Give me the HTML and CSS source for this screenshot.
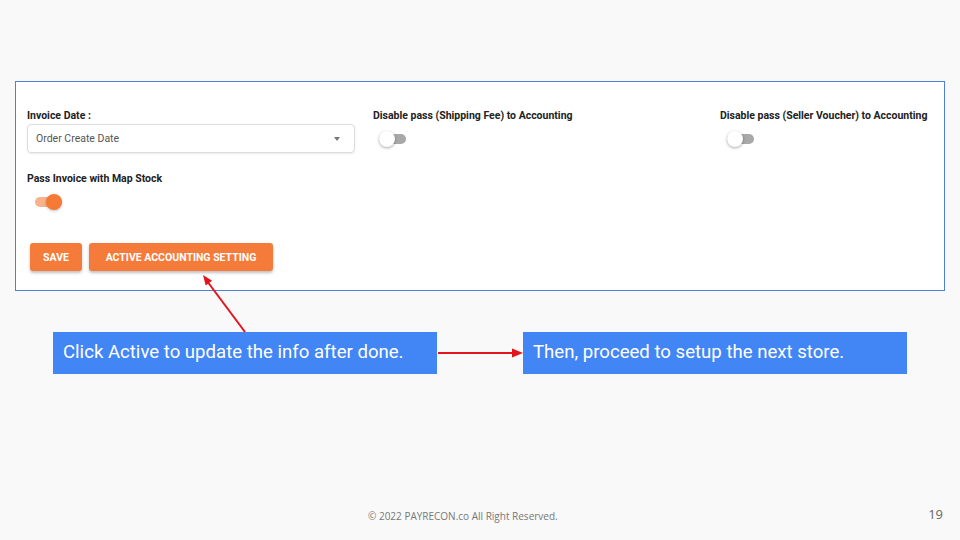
FILE: index.html
```html
<!DOCTYPE html>
<html lang="en">
<head>
    <meta charset="UTF-8">
    <meta name="viewport" content="width=device-width, initial-scale=1.0">
    <title>Accounting Setting</title>
    <link rel="stylesheet" href="styles.css">
</head>
<body>
    <div class="slide">
        <div class="panel">
            <div class="top-row">
                <div class="field">
                    <p class="label">Invoice Date :</p>
                    <div class="select">
                        <span>Order Create Date</span>
                        <span class="caret"></span>
                    </div>
                </div>
                <div class="field">
                    <p class="label">Disable pass (Shipping Fee) to Accounting</p>
                    <div class="switch-wrap">
                        <span class="switch off"><span class="thumb"></span></span>
                    </div>
                </div>
                <div class="field">
                    <p class="label">Disable pass (Seller Voucher) to Accounting</p>
                    <div class="switch-wrap">
                        <span class="switch off shift"><span class="thumb"></span></span>
                    </div>
                </div>
            </div>

            <div class="field map-stock">
                <p class="label">Pass Invoice with Map Stock</p>
                <div class="switch-wrap">
                    <span class="switch on"><span class="thumb"></span></span>
                </div>
            </div>

            <div class="actions">
                <button class="btn save">Save</button>
                <button class="btn active">Active Accounting Setting</button>
            </div>
        </div>

        <div class="callouts">
            <div class="callout">Click Active to update the info after done.</div>
            <div class="callout">Then, proceed to setup the next store.</div>
        </div>

        <div class="footer">
            <span class="copy">© 2022 PAYRECON.co All Right Reserved.</span>
            <span class="page">19</span>
        </div>

        <!-- annotation arrows -->
        <svg class="arrows" width="960" height="540" viewBox="0 0 960 540">
            <line x1="245" y1="332" x2="207" y2="281" stroke="#e3141b" stroke-width="2"/>
            <polygon points="203,275 212.1,280.7 205.7,285.4" fill="#e3141b"/>
            <line x1="438" y1="353" x2="514" y2="353" stroke="#e3141b" stroke-width="2"/>
            <polygon points="523,353 512,348.5 512,357.5" fill="#e3141b"/>
        </svg>
    </div>
</body>
</html>
```

FILE: styles.css
```css
body {
    margin: 0;
    background-color: #f9f9f9;
    font-family: Roboto, "Liberation Sans", sans-serif;
}

.slide {
    position: relative;
    width: 960px;
    height: 540px;
    overflow: hidden;
}

.panel {
    margin: 81px 15px 0;
    background-color: #fff;
    border: 1px solid #4f7fd6;
    padding: 27px 17px 19px 11px;
}

.top-row {
    display: grid;
    grid-template-columns: 328px 329px 1fr;
    column-gap: 18px;
}

.label {
    margin: 0 0 1px;
    font-size: 10.5px;
    font-weight: 700;
    line-height: 14px;
    color: #222;
    white-space: nowrap;
}

.select {
    height: 29px;
    box-sizing: border-box;
    border: 1px solid #dcdcdc;
    border-radius: 4px;
    box-shadow: 0 1px 2px rgba(0, 0, 0, 0.08);
    display: flex;
    align-items: center;
    justify-content: space-between;
    padding: 0 14px 0 8px;
    font-size: 10.5px;
    color: #555;
}

.caret {
    width: 0;
    height: 0;
    border-left: 3.5px solid transparent;
    border-right: 3.5px solid transparent;
    border-top: 4px solid #777;
}

.switch-wrap {
    height: 30px;
    display: flex;
    align-items: center;
}

.switch {
    position: relative;
    width: 27px;
    height: 10px;
    border-radius: 5px;
    margin-left: 6px;
}

.switch.shift {
    margin-left: 7px;
}

.switch .thumb {
    position: absolute;
    top: -3px;
    width: 16px;
    height: 16px;
    border-radius: 50%;
}

.switch.off {
    background-color: #a8a8a8;
}

.switch.off .thumb {
    left: 0;
    background-color: #fff;
    box-shadow: 0 1px 3px rgba(0, 0, 0, 0.35);
}

.switch.on {
    margin-left: 8px;
    background-color: #f8b38c;
}

.switch.on .thumb {
    right: 0;
    background-color: #f47a36;
    box-shadow: 0 1px 3px rgba(0, 0, 0, 0.25);
}

.map-stock {
    margin-top: 18px;
}

.actions {
    margin: 26px 0 0 3px;
    display: flex;
    gap: 7px;
}

.btn {
    height: 28px;
    border: none;
    border-radius: 3px;
    background-color: #f47b3a;
    color: #fff;
    font-family: Roboto, "Liberation Sans", sans-serif;
    font-size: 10.5px;
    font-weight: 700;
    text-transform: uppercase;
    box-shadow: 0 2px 3px rgba(0, 0, 0, 0.25);
    padding: 0;
}

.btn.save {
    width: 52px;
}

.btn.active {
    width: 184px;
}

.callouts {
    margin: 41px 0 0 53px;
    display: flex;
    gap: 86px;
}

.callout {
    width: 384px;
    height: 42px;
    box-sizing: border-box;
    padding: 0 0 2px 10px;
    background-color: #4285f4;
    color: #fff;
    font-size: 18.6px;
    display: flex;
    align-items: center;
}

.footer {
    margin-top: 131px;
    display: flex;
    justify-content: space-between;
    align-items: center;
    padding: 0 17px 0 368px;
    font-family: "Open Sans", "Liberation Sans", sans-serif;
    color: #777;
}

.copy {
    font-size: 10px;
    line-height: 14px;
}

.page {
    font-size: 13px;
    color: #666;
    margin-bottom: 4px;
}

.arrows {
    position: absolute;
    top: 0;
    left: 0;
    pointer-events: none;
}
```
